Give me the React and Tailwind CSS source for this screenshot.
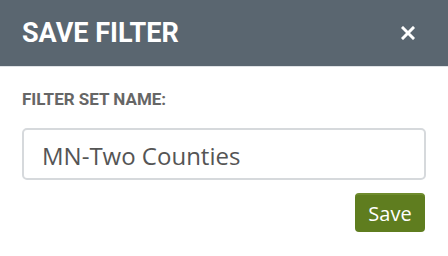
export default function App() {
  return (
    <div className="w-[448px] h-[256px] bg-white overflow-hidden" style={{ fontFamily: 'Roboto, "Open Sans", sans-serif' }}>
      {/* Header */}
      <div className="h-[67px] bg-[#5a6670] flex items-center justify-between pl-[22px] pr-[33px] border-b border-[#dfe3e6]">
        <h2 className="text-white font-bold text-[27px] leading-none">SAVE FILTER</h2>
        <svg width="14" height="14" viewBox="0 0 14 14" className="text-white">
          <path d="M2 2 L12 12 M12 2 L2 12" stroke="currentColor" strokeWidth="3" strokeLinecap="square" />
        </svg>
      </div>

      {/* Body */}
      <div className="px-[22px] pt-[22px]">
        <label className="block text-[#666] font-bold text-[17px] leading-[20px]">FILTER SET NAME:</label>
        <input
          readOnly
          value="MN-Two Counties"
          className="mt-[19px] w-full h-[52px] border-2 border-[#d6d9dc] rounded-[5px] px-[18px] pt-[2px] text-[24px] text-[#555] outline-none"
          style={{ fontFamily: '"Open Sans", sans-serif' }}
        />
        <div className="flex justify-end mt-[13px] pr-[1px]">
          <button
            className="w-[70px] h-[39px] bg-[#5f7d1f] rounded-[4px] text-white text-[20px] leading-none border-t-2 border-[#6f8c2e]"
            style={{ fontFamily: '"Open Sans", sans-serif' }}
          >
            Save
          </button>
        </div>
      </div>
    </div>
  );
}
